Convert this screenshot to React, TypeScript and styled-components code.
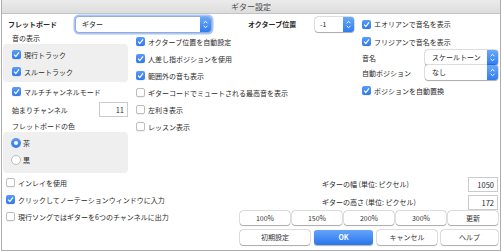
import React from "react";
import styled, { createGlobalStyle } from "styled-components";

const GlobalStyle = createGlobalStyle`
  body {
    margin: 0;
    background: #fff;
  }
  * {
    box-sizing: border-box;
  }
`;

const Window = styled.div`
  margin-left: 1px;
  width: 500px;
  height: 251px;
  border: 1px solid #adadad;
  border-top: none;
  background: #fff;
  font-family: "Noto Sans CJK JP", "Noto Sans", sans-serif;
  font-size: 7px;
  color: #2a2a2a;
  display: flex;
  flex-direction: column;
  overflow: hidden;
`;

const TitleBar = styled.div`
  height: 14px;
  border-bottom: 1px solid #c4c4c4;
  background: linear-gradient(#ebebeb, #dddddd);
  text-align: center;
  font-size: 8px;
  line-height: 13px;
  color: #4a4a4a;
`;

const Body = styled.div`
  padding: 0 2px 0 1px;
  display: flex;
  flex-direction: column;
`;

const TopRow = styled.div`
  margin-top: 2px;
  height: 16px;
  padding-left: 5px;
  display: flex;
  align-items: center;
`;

const Label = styled.span<{ $w?: number; $bold?: boolean; $ml?: number }>`
  width: ${(p) => (p.$w ? `${p.$w}px` : "auto")};
  margin-left: ${(p) => p.$ml ?? 0}px;
  font-weight: ${(p) => (p.$bold ? 700 : 400)};
  white-space: nowrap;
  flex-shrink: 0;
`;

const Select = styled.div<{ $w?: number; $focus?: boolean }>`
  width: ${(p) => (p.$w ? `${p.$w}px` : "auto")};
  flex: ${(p) => (p.$w ? "none" : 1)};
  height: 15px;
  display: flex;
  background: #fff;
  border-radius: 3px;
  box-shadow: ${(p) =>
    p.$focus
      ? "0 0 0 0.5px rgba(0,0,0,0.25), 0 0 0 2.5px rgba(110,160,240,0.6)"
      : "0 0 0 0.5px rgba(0,0,0,0.22), 0 0.5px 1px rgba(0,0,0,0.25)"};
`;

const SelectText = styled.span<{ $pad?: number; $right?: boolean }>`
  flex: 1;
  padding: 0 4px 0 ${(p) => p.$pad ?? 6}px;
  line-height: 15px;
  text-align: ${(p) => (p.$right ? "right" : "left")};
  white-space: nowrap;
`;

const StepperBox = styled.span`
  width: 11px;
  height: 100%;
  flex: none;
  border-radius: 0 3px 3px 0;
  background: linear-gradient(#69a9f9, #2f7bf1);
  display: flex;
  align-items: center;
  justify-content: center;
`;

const Stepper = () => (
  <StepperBox>
    <svg width="7" height="11" viewBox="0 0 7 11">
      <path d="M1.6 4.2 L3.5 2.3 L5.4 4.2" fill="none" stroke="#fff" strokeWidth="1" />
      <path d="M1.6 6.8 L3.5 8.7 L5.4 6.8" fill="none" stroke="#fff" strokeWidth="1" />
    </svg>
  </StepperBox>
);

const Field = styled.div<{ $w: number }>`
  width: ${(p) => p.$w}px;
  height: 15px;
  flex: none;
  border: 1px solid #cbcbcb;
  background: #fff;
  text-align: right;
  padding-right: 3px;
  line-height: 13px;
  font-size: 7.5px;
`;

const Columns = styled.div`
  margin-top: 1px;
  display: grid;
  grid-template-columns: 125px 218px 136px;
  column-gap: 8px;
`;

const Col = styled.div`
  display: flex;
  flex-direction: column;
`;

const Caption = styled.div<{ $h: number; $pt?: number }>`
  height: ${(p) => p.$h}px;
  padding: ${(p) => p.$pt ?? 0}px 0 0 9px;
  line-height: ${(p) => p.$h - (p.$pt ?? 0)}px;
  white-space: nowrap;
`;

const Group = styled.div<{ $pb: number }>`
  background: #efefef;
  border-radius: 4px;
  padding: 2px 0 ${(p) => p.$pb}px 0;
`;

const CheckRow = styled.div<{ $indent?: number; $h?: number; $mt?: number }>`
  height: ${(p) => p.$h ?? 17}px;
  margin-top: ${(p) => p.$mt ?? 0}px;
  padding-left: ${(p) => p.$indent ?? 0}px;
  display: flex;
  align-items: center;
  gap: 3px;
  white-space: nowrap;
`;

const Box = styled.span<{ $on?: boolean }>`
  width: 9px;
  height: 9px;
  flex: none;
  border-radius: 2px;
  display: flex;
  align-items: center;
  justify-content: center;
  background: ${(p) => (p.$on ? "linear-gradient(#5a9cf9, #2f78ee)" : "#fff")};
  border: ${(p) => (p.$on ? "none" : "1px solid #bdbdbd")};
  box-shadow: 0 0.5px 0.5px rgba(0, 0, 0, 0.12);
`;

const Check = ({
  on,
  indent,
  mt,
  children,
}: {
  on?: boolean;
  indent?: number;
  mt?: number;
  children: React.ReactNode;
}) => (
  <CheckRow $indent={indent} $mt={mt}>
    <Box $on={on}>
      {on && (
        <svg width="9" height="9" viewBox="0 0 9 9">
          <path d="M2.1 4.7 L3.8 6.5 L7 2.4" fill="none" stroke="#fff" strokeWidth="1.2" />
        </svg>
      )}
    </Box>
    <span>{children}</span>
  </CheckRow>
);

const RadioDot = styled.span<{ $on?: boolean }>`
  width: 10px;
  height: 10px;
  flex: none;
  border-radius: 50%;
  display: flex;
  align-items: center;
  justify-content: center;
  background: ${(p) => (p.$on ? "linear-gradient(#5a9cf9, #2f78ee)" : "#fff")};
  border: ${(p) => (p.$on ? "none" : "1px solid #bdbdbd")};
  &::after {
    content: "";
    width: 4px;
    height: 4px;
    border-radius: 50%;
    background: #fff;
    display: ${(p) => (p.$on ? "block" : "none")};
  }
`;

const Radio = ({ on, children }: { on?: boolean; children: React.ReactNode }) => (
  <CheckRow $indent={8} $h={17} style={{ gap: 2 }}>
    <RadioDot $on={on} />
    <span>{children}</span>
  </CheckRow>
);

const FieldRow = styled.div<{ $indent?: number; $h?: number }>`
  height: ${(p) => p.$h ?? 17}px;
  padding-left: ${(p) => p.$indent ?? 0}px;
  display: flex;
  align-items: center;
  justify-content: space-between;
  white-space: nowrap;
`;

const Bottom = styled.div`
  margin-top: 1px;
  display: grid;
  grid-template-columns: 237px 258px;
`;

const RightPanel = styled.div`
  display: flex;
  flex-direction: column;
  padding-top: 1px;
`;

const ButtonGrid = styled.div<{ $cols: string; $gap: number; $mt?: number }>`
  display: grid;
  grid-template-columns: ${(p) => p.$cols};
  gap: ${(p) => p.$gap}px;
  margin-top: ${(p) => p.$mt ?? 0}px;
`;

const Button = styled.div<{ $primary?: boolean; $h?: number }>`
  height: ${(p) => p.$h ?? 14}px;
  line-height: ${(p) => p.$h ?? 14}px;
  text-align: center;
  border-radius: 3px;
  background: ${(p) => (p.$primary ? "linear-gradient(#63a5fa, #2a74ee)" : "#fff")};
  color: ${(p) => (p.$primary ? "#fff" : "#333")};
  font-weight: ${(p) => (p.$primary ? 700 : 400)};
  box-shadow: ${(p) =>
    p.$primary
      ? "0 0.5px 1px rgba(0,0,0,0.3)"
      : "0 0 0 0.5px rgba(0,0,0,0.22), 0 0.5px 1px rgba(0,0,0,0.25)"};
`;

const middleChecks: [string, boolean][] = [
  ["オクターブ位置を自動設定", true],
  ["人差し指ポジションを使用", true],
  ["範囲外の音も表示", true],
  ["ギターコードでミュートされる最高音を表示", false],
  ["左利き表示", false],
  ["レッスン表示", false],
];

const lowerChecks: [string, boolean][] = [
  ["インレイを使用", false],
  ["クリックしてノーテーションウィンドウに入力", true],
  ["現行ソングではギターを6つのチャンネルに出力", false],
];

export default function App() {
  return (
    <>
      <GlobalStyle />
      <Window>
        <TitleBar>ギター設定</TitleBar>
        <Body>
          <TopRow>
            <Label $w={68} $bold>
              フレットボード
            </Label>
            <Select $w={135} $focus>
              <SelectText>ギター</SelectText>
              <Stepper />
            </Select>
            <Label $w={67} $ml={37} $bold>
              オクターブ位置
            </Label>
            <Select $w={39}>
              <SelectText $pad={5}>-1</SelectText>
              <Stepper />
            </Select>
            <CheckRow style={{ marginLeft: 8 }}>
              <Box $on>
                <svg width="9" height="9" viewBox="0 0 9 9">
                  <path d="M2.1 4.7 L3.8 6.5 L7 2.4" fill="none" stroke="#fff" strokeWidth="1.2" />
                </svg>
              </Box>
              <span>エオリアンで音名を表示</span>
            </CheckRow>
          </TopRow>

          <Columns>
            <Col>
              <Caption $h={11}>音の表示</Caption>
              <Group $pb={2}>
                <Check on indent={9}>
                  現行トラック
                </Check>
                <Check on indent={9}>
                  スルートラック
                </Check>
              </Group>
              <Check on indent={9} mt={1}>
                マルチチャンネルモード
              </Check>
              <FieldRow $indent={9} $h={19}>
                <span>始まりチャンネル</span>
                <Field $w={29}>11</Field>
              </FieldRow>
              <Caption $h={13} $pt={2}>
                フレットボードの色
              </Caption>
              <Group $pb={5}>
                <Radio on>茶</Radio>
                <Radio>黒</Radio>
              </Group>
            </Col>

            <Col>
              {middleChecks.map(([text, on]) => (
                <Check key={text} on={on}>
                  {text}
                </Check>
              ))}
            </Col>

            <Col>
              <Check on>フリジアンで音名を表示</Check>
              <FieldRow $h={15}>
                <Label $w={63}>音名</Label>
                <Select>
                  <SelectText $pad={7}>スケールトーン</SelectText>
                  <Stepper />
                </Select>
              </FieldRow>
              <FieldRow $h={15}>
                <Label $w={63}>自動ポジション</Label>
                <Select>
                  <SelectText $pad={7}>なし</SelectText>
                  <Stepper />
                </Select>
              </FieldRow>
              <Check on mt={2}>
                ポジションを自動置換
              </Check>
            </Col>
          </Columns>

          <Bottom>
            <Col>
              {lowerChecks.map(([text, on]) => (
                <Check key={text} on={on} indent={3}>
                  {text}
                </Check>
              ))}
            </Col>
            <RightPanel>
              <FieldRow $indent={82} $h={18}>
                <span>ギターの幅 (単位: ピクセル)</span>
                <Field $w={30}>1050</Field>
              </FieldRow>
              <FieldRow $indent={82} $h={18}>
                <span>ギターの高さ (単位: ピクセル)</span>
                <Field $w={30}>172</Field>
              </FieldRow>
              <ButtonGrid $cols="repeat(5, 1fr)" $gap={2}>
                {["100%", "150%", "200%", "300%", "更新"].map((b) => (
                  <Button key={b}>{b}</Button>
                ))}
              </ButtonGrid>
              <ButtonGrid $cols="70px 59px 60px 1fr" $gap={4} $mt={5}>
                <Button $h={15}>初期設定</Button>
                <Button $h={15} $primary>
                  OK
                </Button>
                <Button $h={15}>キャンセル</Button>
                <Button $h={15}>ヘルプ</Button>
              </ButtonGrid>
            </RightPanel>
          </Bottom>
        </Body>
      </Window>
    </>
  );
}
